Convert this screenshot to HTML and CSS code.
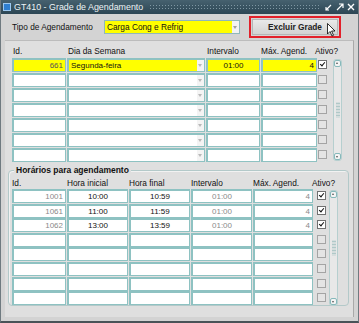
FILE: index.html
```html
<!DOCTYPE html>
<html lang="pt-BR">
<head>
    <meta charset="UTF-8">
    <title>GT410 - Grade de Agendamento</title>
    <link rel="stylesheet" href="styles.css">
</head>
<body>
    <div class="window">
        <div class="titlebar">
            <span class="app-icon"></span>
            <span class="title">GT410 - Grade de Agendamento</span>
            <span class="grip"></span>
            <span class="win-buttons">
                <svg width="8" height="8" viewBox="0 0 8 8"><path d="M1 7 L6 2 M1 4 V7 H4" stroke="#fff" stroke-width="1.2" fill="none"/></svg>
                <svg width="8" height="8" viewBox="0 0 8 8"><path d="M1 7 L7 1 M3 1 H7 V5" stroke="#fff" stroke-width="1.2" fill="none"/></svg>
                <svg width="8" height="8" viewBox="0 0 8 8"><path d="M1 1 L7 7 M7 1 L1 7" stroke="#fff" stroke-width="1.4" fill="none"/></svg>
            </span>
        </div>

        <div class="toolbar">
            <span class="label">Tipo de Agendamento</span>
            <div class="select">
                <span class="select-text">Carga Cong e Refrig</span>
                <span class="drop"></span>
            </div>
            <div class="btn-frame">
                <button class="btn">Excluir Grade</button>
                <svg class="cursor" width="9" height="14" viewBox="0 0 9 14"><path d="M0.5 0.5 V11 L3 8.5 L5 13 L6.5 12.3 L4.6 8 H8 Z" fill="#fff" stroke="#000" stroke-width="0.8"/></svg>
            </div>
        </div>

        <div class="panel">
            <!-- grade -->
            <div class="head grade">
                <span>Id.</span>
                <span>Dia da Semana</span>
                <span>Intervalo</span>
                <span>Máx. Agend.</span>
                <span>Ativo?</span>
            </div>
            <div class="block first">
                <div class="rows">
                    <div class="row grade">
                        <div class="cell yellow right dim">661</div>
                        <div class="cell yellow list">Segunda-feira<span class="drop"></span></div>
                        <div class="cell yellow center">01:00</div>
                        <div class="cell yellow right">4</div>
                        <div class="check on"></div>
                    </div>
                    <div class="row grade"><div class="cell"></div><div class="cell list"><span class="drop"></span></div><div class="cell"></div><div class="cell"></div><div class="check"></div></div>
                    <div class="row grade"><div class="cell"></div><div class="cell list"><span class="drop"></span></div><div class="cell"></div><div class="cell"></div><div class="check"></div></div>
                    <div class="row grade"><div class="cell"></div><div class="cell list"><span class="drop"></span></div><div class="cell"></div><div class="cell"></div><div class="check"></div></div>
                    <div class="row grade"><div class="cell"></div><div class="cell list"><span class="drop"></span></div><div class="cell"></div><div class="cell"></div><div class="check"></div></div>
                    <div class="row grade"><div class="cell"></div><div class="cell list"><span class="drop"></span></div><div class="cell"></div><div class="cell"></div><div class="check"></div></div>
                    <div class="row grade"><div class="cell"></div><div class="cell list"><span class="drop"></span></div><div class="cell"></div><div class="cell"></div><div class="check"></div></div>
                </div>
                <div class="scrollbar short">
                    <span class="arrow up"></span>
                    <span class="dots"></span>
                    <span class="arrow down"></span>
                </div>
            </div>

            <!-- horarios -->
            <div class="group">
                <div class="legend">Horários para agendamento</div>
                <div class="head horarios">
                    <span>Id.</span>
                    <span>Hora inicial</span>
                    <span>Hora final</span>
                    <span>Intervalo</span>
                    <span>Máx. Agend.</span>
                    <span>Ativo?</span>
                </div>
                <div class="block">
                    <div class="rows">
                        <div class="row horarios">
                            <div class="cell right gray">1001</div>
                            <div class="cell center">10:00</div>
                            <div class="cell center">10:59</div>
                            <div class="cell center gray">01:00</div>
                            <div class="cell right gray">4</div>
                            <div class="check on"></div>
                        </div>
                        <div class="row horarios">
                            <div class="cell right gray">1061</div>
                            <div class="cell center">11:00</div>
                            <div class="cell center">11:59</div>
                            <div class="cell center gray">01:00</div>
                            <div class="cell right gray">4</div>
                            <div class="check on"></div>
                        </div>
                        <div class="row horarios">
                            <div class="cell right gray">1062</div>
                            <div class="cell center">13:00</div>
                            <div class="cell center">13:59</div>
                            <div class="cell center gray">01:00</div>
                            <div class="cell right gray">4</div>
                            <div class="check on"></div>
                        </div>
                        <div class="row horarios"><div class="cell"></div><div class="cell"></div><div class="cell"></div><div class="cell"></div><div class="cell"></div><div class="check"></div></div>
                        <div class="row horarios"><div class="cell"></div><div class="cell"></div><div class="cell"></div><div class="cell"></div><div class="cell"></div><div class="check"></div></div>
                        <div class="row horarios"><div class="cell"></div><div class="cell"></div><div class="cell"></div><div class="cell"></div><div class="cell"></div><div class="check"></div></div>
                        <div class="row horarios"><div class="cell"></div><div class="cell"></div><div class="cell"></div><div class="cell"></div><div class="cell"></div><div class="check"></div></div>
                        <div class="row horarios"><div class="cell"></div><div class="cell"></div><div class="cell"></div><div class="cell"></div><div class="cell"></div><div class="check"></div></div>
                    </div>
                    <div class="scrollbar tall">
                        <span class="arrow up"></span>
                        <span class="dots"></span>
                        <span class="arrow down"></span>
                    </div>
                </div>
            </div>
        </div>
    </div>
</body>
</html>
```

FILE: styles.css
```css
body {
    margin: 0;
    background: #fff;
    font-family: "Liberation Sans", Arial, sans-serif;
    font-size: 8.3px;
    color: #111;
}

.window {
    width: 359px;
    height: 323px;
    box-sizing: border-box;
    background: #d3d3d3;
    border: 1px solid #6f7a80;
    border-top: none;
    border-bottom: 2px solid #4a5358;
    display: flex;
    flex-direction: column;
}

.titlebar {
    height: 14px;
    background: linear-gradient(#46616f, #2c4654);
    display: flex;
    align-items: center;
    color: #eef3f5;
    font-size: 8.9px;
    padding: 0 3px 0 2px;
}

.app-icon {
    width: 8px;
    height: 8px;
    background: #2f7fd0;
    border: 1px solid #9cc8f0;
    box-sizing: border-box;
    margin-right: 3px;
}

.title {
    white-space: nowrap;
}

.grip {
    flex: 1;
    height: 6px;
    margin: 0 6px;
    background-image: radial-gradient(#7f97a3 0.7px, transparent 0.8px);
    background-size: 3px 3px;
}

.win-buttons {
    display: flex;
    gap: 3px;
}

.toolbar {
    height: 26px;
    display: flex;
    align-items: center;
    padding-left: 11px;
}

.toolbar .label {
    width: 92px;
}

.select {
    width: 136px;
    height: 14px;
    box-sizing: border-box;
    border: 1px solid #8fb8bb;
    background: #fff;
    display: flex;
    align-items: center;
    margin-top: -1px;
}

.select-text {
    flex: 1;
    height: 100%;
    background: #ffff00;
    padding-left: 2px;
    line-height: 12px;
}

.drop {
    width: 7px;
    height: 100%;
    background: #f2f2f2;
    position: relative;
}

.drop::after {
    content: "";
    position: absolute;
    left: 1px;
    top: 5px;
    border-left: 2.5px solid transparent;
    border-right: 2.5px solid transparent;
    border-top: 3px solid #a0a0a0;
}

.btn-frame {
    margin-left: 9px;
    width: 92px;
    height: 22px;
    box-sizing: border-box;
    border: 2px solid #e2202a;
    padding: 1px;
    position: relative;
}

.btn {
    width: 100%;
    height: 100%;
    margin: 0;
    padding: 0;
    border: 1px solid #b5b5b5;
    background: linear-gradient(#e9e9e9, #d2d2d2);
    font-family: inherit;
    font-size: 8.3px;
    font-weight: bold;
    color: #222;
}

.cursor {
    position: absolute;
    left: 76px;
    top: 5px;
}

.panel {
    flex: 1;
    margin: 0 4px 4px 4px;
    background: #dfdfdf;
    border-top: 1px solid #bcbcbc;
    border-right: 1px solid #a9a9a9;
    padding-top: 4px;
}

.head {
    display: grid;
    height: 11px;
    align-items: end;
    padding-bottom: 2px;
}

.head span {
    white-space: nowrap;
}

.grade {
    display: grid;
    grid-template-columns: 55px 139px 55px 57px 9px;
}

.head.grade {
    padding-left: 8px;
}

.head.grade span:nth-child(4) {
    margin-left: -1px;
}

.head.grade span:nth-child(5) {
    margin-left: -4px;
}

.block {
    display: flex;
}

.block.first {
    padding-left: 7px;
}

.rows {
    display: flex;
    flex-direction: column;
    gap: 1px;
}

.row {
    height: 14px;
}

.cell {
    height: 14px;
    box-sizing: border-box;
    background: #fff;
    border: 1px solid #8ec2c2;
    border-top: 2px solid #8ec2c2;
    border-left: 2px solid #8ec2c2;
    margin-right: 1px;
    line-height: 11px;
    padding: 0 2px;
    font-size: 8px;
    white-space: nowrap;
    overflow: hidden;
}

.cell.yellow {
    background: #ffff00;
}

.cell.right {
    text-align: right;
}

.cell.center {
    text-align: center;
}

.cell.dim {
    color: #555;
}

.cell.gray {
    color: #8a8a8a;
}

.cell.list {
    display: flex;
    padding-right: 0;
}

.cell.list .drop {
    margin-left: auto;
    background: #f4f4f4;
}

.cell.list .drop::after {
    top: 4px;
    border-top-color: #b8b8b8;
}

.check {
    width: 9px;
    height: 9px;
    box-sizing: border-box;
    margin-top: 2px;
    border: 1px solid #a4a4a4;
    background: #e4e4e4;
    position: relative;
}

.check.on {
    background: #fff;
    border-color: #707070;
}

.check.on::after {
    content: "";
    position: absolute;
    left: 2px;
    top: 0px;
    width: 2px;
    height: 4px;
    border-right: 1.5px solid #111;
    border-bottom: 1.5px solid #111;
    transform: rotate(40deg);
}

.scrollbar {
    width: 9px;
    box-sizing: border-box;
    border: 1px solid #b6cfcf;
    border-radius: 3px;
    background: #e8e8e8;
    display: flex;
    flex-direction: column;
    justify-content: space-between;
    align-items: center;
    margin-top: 1px;
}

.scrollbar.short {
    margin-left: 6px;
    height: 102px;
}

.scrollbar.tall {
    margin-left: 6px;
    height: 116px;
}

.arrow {
    width: 7px;
    height: 7px;
    box-sizing: border-box;
    border: 1px solid #86b9bb;
    border-radius: 2px;
    background: #f4f4f4;
    position: relative;
}

.arrow::after {
    content: "";
    position: absolute;
    left: 1px;
    border-left: 1.5px solid transparent;
    border-right: 1.5px solid transparent;
}

.arrow.up::after {
    top: 1px;
    border-bottom: 2px solid #555;
}

.arrow.down::after {
    top: 2px;
    border-top: 2px solid #555;
}

.dots {
    width: 4px;
    height: 16px;
    background-image: radial-gradient(#b0c8c8 0.7px, transparent 0.9px);
    background-size: 2px 3px;
}

.group {
    margin: 8px 4px 0 3px;
    position: relative;
    border: 1px solid #b3c9c9;
    border-radius: 4px;
    box-shadow: inset 1px 1px 0 #f2f2f2;
    padding: 7px 0 3px 3px;
    height: 136px;
    box-sizing: border-box;
}

.legend {
    position: absolute;
    top: -6px;
    left: 5px;
    padding: 0 2px;
    background: #dfdfdf;
    font-weight: bold;
    font-size: 8.5px;
}

.horarios {
    display: grid;
    grid-template-columns: 55px 62px 62px 62px 61px 9px;
}

.horarios .check {
    margin-left: 3px;
}

.head.horarios {
    height: 9px;
}

.head.horarios span:nth-child(6) {
    margin-left: -2px;
}

.group .rows {
    gap: 0.6px;
}
```
